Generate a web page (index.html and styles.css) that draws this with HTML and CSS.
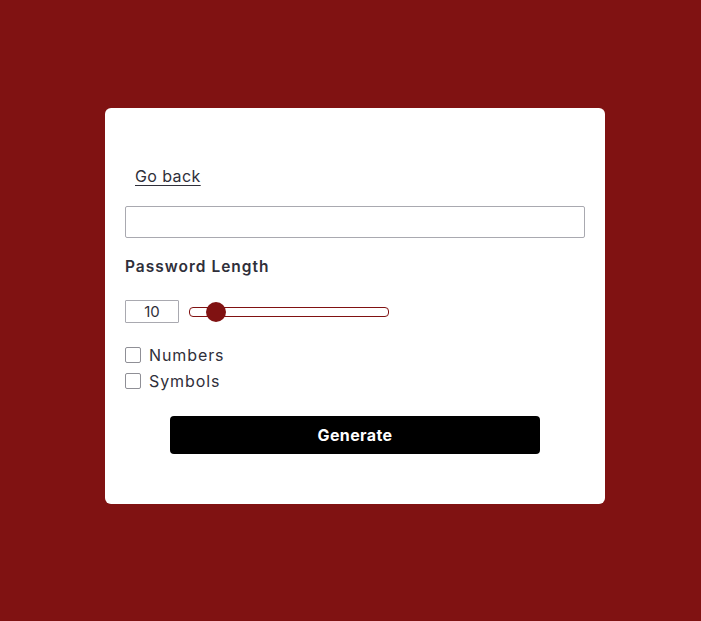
FILE: index.html
```html
<!DOCTYPE html>
<html lang="en">
<head>
<meta charset="utf-8">
<title>Password Generator</title>
<link rel="stylesheet" href="styles.css">
</head>
<body>
<main class="page">
  <section class="card">
    <a class="back" href="#">Go back</a>
    <input class="output" type="text" aria-label="Generated password">
    <h2 class="label">Password Length</h2>
    <div class="length-row">
      <input class="length-num" type="text" value="10" aria-label="Length">
      <input class="length-range" type="range" min="6" max="50" value="10" aria-label="Length slider">
    </div>
    <div class="options">
      <label class="option"><input type="checkbox" class="check"><span>Numbers</span></label>
      <label class="option"><input type="checkbox" class="check"><span>Symbols</span></label>
    </div>
    <div class="actions">
      <button class="generate" type="button">Generate</button>
    </div>
  </section>
</main>
</body>
</html>
```
FILE: styles.css
```css
* { box-sizing: border-box; }
html, body { margin: 0; padding: 0; }
body {
  background: #801212;
  font-family: Inter, "Open Sans", sans-serif;
  color: #2f2f3a;
  min-height: 621px;
}
.page {
  display: flex;
  justify-content: center;
  padding: 108px 0 0 9px;
}
.card {
  width: 500px;
  height: 396px;
  background: #fff;
  border-radius: 6px;
  padding: 58px 20px 20px;
  display: flex;
  flex-direction: column;
}
.back {
  align-self: flex-start;
  margin-left: 10px;
  font-size: 16px;
  line-height: 20px;
  letter-spacing: 0.4px;
  color: #2f2f3a;
  text-decoration: underline;
  text-underline-offset: 3px;
  text-decoration-thickness: 1px;
}
.output {
  margin-top: 20px;
  width: 460px;
  height: 32px;
  border: 1px solid #a9a9b0;
  border-radius: 2px;
  font: inherit;
}
.label {
  margin: 19px 0 0;
  font-size: 15.5px;
  line-height: 20px;
  font-weight: 600;
  letter-spacing: 1px;
}
.length-row {
  margin-top: 23px;
  display: flex;
  align-items: center;
  gap: 10px;
  height: 23px;
}
.length-num {
  width: 54px;
  height: 23px;
  border: 1px solid #a9a9b0;
  border-radius: 1px;
  text-align: center;
  font: 15px Inter, "Open Sans", sans-serif;
  color: #2f2f3a;
  padding: 0;
}
.length-range {
  -webkit-appearance: none;
  appearance: none;
  width: 200px;
  height: 10px;
  margin: 0;
  border: 1px solid #801212;
  border-radius: 4px;
  background: #fff;
}
.length-range::-webkit-slider-thumb {
  -webkit-appearance: none;
  appearance: none;
  width: 20px;
  height: 20px;
  border-radius: 50%;
  background: #801212;
  border: none;
  cursor: pointer;
}
.options {
  margin-top: 24px;
  display: flex;
  flex-direction: column;
  gap: 10px;
}
.option {
  display: flex;
  align-items: center;
  gap: 8px;
  font-size: 16px;
  line-height: 16px;
  letter-spacing: 0.9px;
}
.check {
  -webkit-appearance: none;
  appearance: none;
  width: 16px;
  height: 16px;
  margin: 0;
  border: 1px solid #8f8f96;
  border-radius: 2px;
  background: #fff;
}
.actions {
  margin-top: 27px;
  display: flex;
  justify-content: center;
}
.generate {
  width: 370px;
  height: 38px;
  background: #000;
  color: #fff;
  border: none;
  border-radius: 4px;
  font: 700 16px Inter, "Open Sans", sans-serif;
  letter-spacing: 0.4px;
}
```
